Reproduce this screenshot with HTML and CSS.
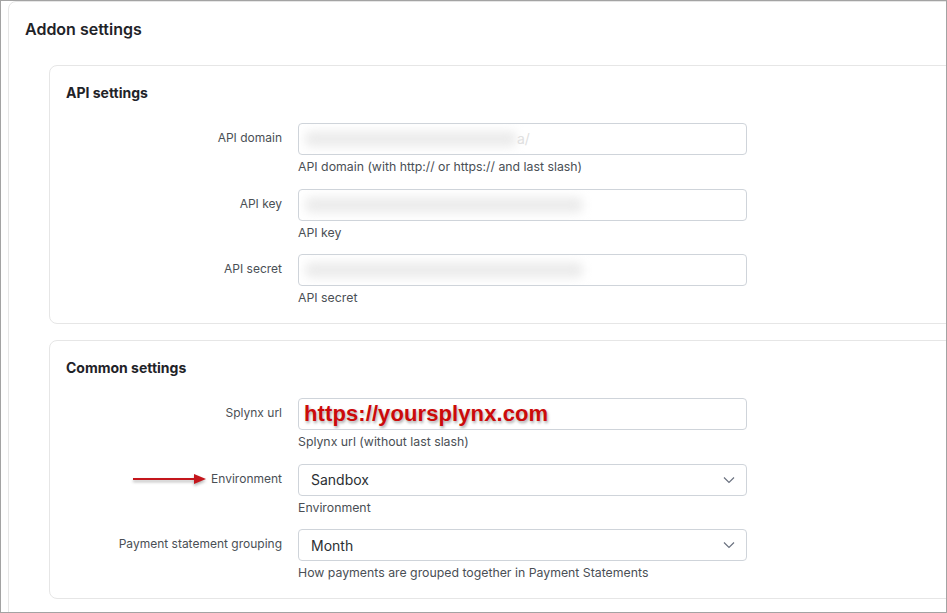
FILE: index.html
```html
<!DOCTYPE html>
<html>
<head>
<meta charset="utf-8">
<link rel="stylesheet" href="styles.css">
</head>
<body>
<div class="frame">
  <div class="card">
    <h1 class="title">Addon settings</h1>

    <section class="panel">
      <h2 class="panel-title">API settings</h2>
      <div class="row">
        <label class="label">API domain</label>
        <div class="control">
          <div class="input"><span class="blur blur-domain"></span><span class="slash">a/</span></div>
          <div class="help">API domain (with http:// or https:// and last slash)</div>
        </div>
      </div>
      <div class="row">
        <label class="label">API key</label>
        <div class="control">
          <div class="input"><span class="blur blur-key"></span></div>
          <div class="help">API key</div>
        </div>
      </div>
      <div class="row">
        <label class="label">API secret</label>
        <div class="control">
          <div class="input"><span class="blur blur-key"></span></div>
          <div class="help">API secret</div>
        </div>
      </div>
    </section>

    <section class="panel">
      <h2 class="panel-title">Common settings</h2>
      <div class="row">
        <label class="label">Splynx url</label>
        <div class="control">
          <div class="input input-url"><span class="url">https://yoursplynx.com</span></div>
          <div class="help">Splynx url (without last slash)</div>
        </div>
      </div>
      <div class="row">
        <label class="label label-arrow">Environment<span class="arrow"><svg width="76" height="12" viewBox="0 0 76 12"><line x1="1" y1="6" x2="64" y2="6" stroke="#c4161c" stroke-width="2"/><polygon points="62,1 74,6 62,11" fill="#c4161c"/></svg></span></label>
        <div class="control">
          <div class="input select"><span>Sandbox</span><svg class="chev" width="12" height="8" viewBox="0 0 12 8"><polyline points="1,1.5 6,6.5 11,1.5" fill="none" stroke="#6b7280" stroke-width="1.2"/></svg></div>
          <div class="help">Environment</div>
        </div>
      </div>
      <div class="row">
        <label class="label">Payment statement grouping</label>
        <div class="control">
          <div class="input select"><span>Month</span><svg class="chev" width="12" height="8" viewBox="0 0 12 8"><polyline points="1,1.5 6,6.5 11,1.5" fill="none" stroke="#6b7280" stroke-width="1.2"/></svg></div>
          <div class="help">How payments are grouped together in Payment Statements</div>
        </div>
      </div>
    </section>
  </div>
</div>
</body>
</html>
```
FILE: styles.css
```css
* { box-sizing: border-box; }
html, body { margin: 0; padding: 0; background: #fff; }
body { font-family: Inter, "Noto Sans", "Liberation Sans", sans-serif; color: #222; }

.frame {
  width: 947px;
  height: 613px;
  border: 1px solid #a3a3a3;
  overflow: hidden;
  padding: 0 0 0 7px;
}

.card {
  width: 1100px;
  border: 1px solid #e6e6e6;
  border-radius: 8px;
  padding: 15px 0 0 16px;
  min-height: 700px;
}

.title {
  margin: 0 0 24px 0;
  font-size: 16px;
  line-height: 24px;
  font-weight: 600;
  color: #1f2328;
}

.panel {
  margin: 0 0 16px 24px;
  width: 1000px;
  border: 1px solid #e6e6e6;
  border-radius: 8px;
  padding: 17px 16px 17px 16px;
}

.panel-title {
  margin: 0 0 20px 0;
  font-size: 14px;
  line-height: 20px;
  font-weight: 700;
  color: #1f2328;
}

.row {
  display: grid;
  grid-template-columns: 216px 449px;
  column-gap: 16px;
  margin-bottom: 13.5px;
}
.row:last-child { margin-bottom: 0; }

.label {
  text-align: right;
  font-size: 12px;
  line-height: 16px;
  padding-top: 7px;
  color: #4a4f55;
}
.label-arrow { position: relative; }
.arrow {
  position: absolute;
  right: 74px;
  top: 9px;
  filter: drop-shadow(0 2px 1.5px rgba(0,0,0,0.3));
  line-height: 0;
}

.input {
  position: relative;
  height: 32px;
  border: 1px solid #cfd4da;
  border-radius: 4px;
  background: #fff;
  display: flex;
  align-items: center;
  padding: 0 12px;
  font-size: 14px;
  color: #2b2f33;
  overflow: hidden;
}

.blur {
  position: absolute;
  top: 7px;
  left: 6px;
  height: 16px;
  background: #ececec;
  filter: blur(5px);
  border-radius: 6px;
}
.blur-domain { width: 212px; }
.blur-key { width: 278px; }
.slash {
  position: absolute;
  left: 218px;
  top: 6px;
  font-size: 14px;
  color: #8a8a8a;
}
.slash::first-letter { color: #e0e0e0; }

.input-url { padding-left: 5px; }
.url {
  font-family: "Liberation Sans", Arial, sans-serif;
  font-weight: 700;
  font-size: 22px;
  color: #cc0a0a;
  text-shadow: 1px 2px 3px rgba(0,0,0,0.35);
  letter-spacing: 0.1px;
}

.select { justify-content: space-between; padding-right: 11px; }
.chev { display: block; }

.help {
  margin-top: 4px;
  font-size: 12.3px;
  line-height: 16px;
  color: #4a4f55;
}
```
